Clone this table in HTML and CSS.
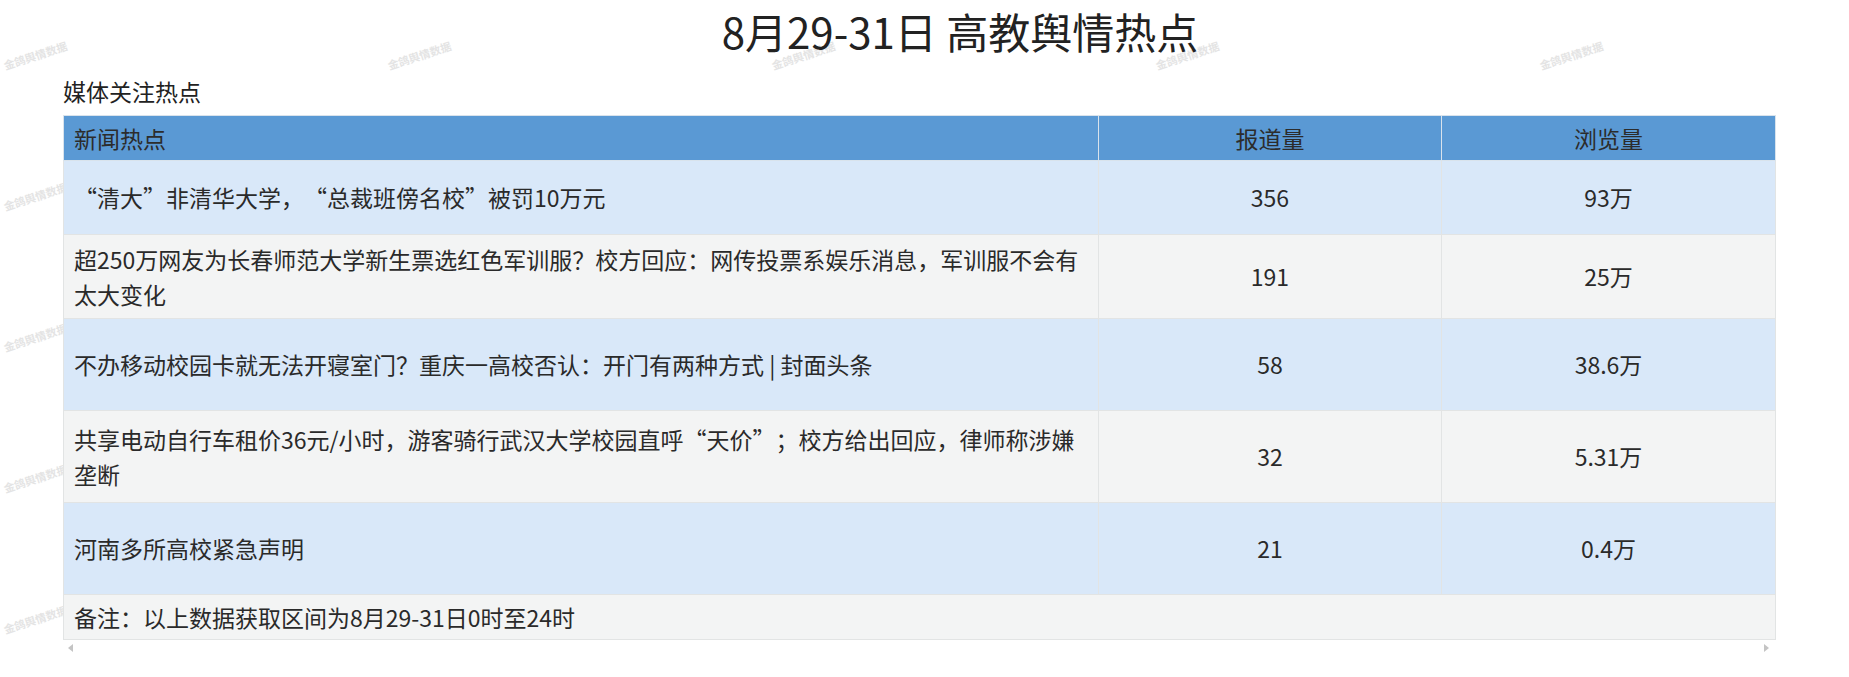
FILE: index.html
```html
<!DOCTYPE html>
<html lang="zh-CN">
<head>
<meta charset="utf-8">
<title>8月29-31日 高教舆情热点</title>
<link rel="stylesheet" href="styles.css">
</head>
<body>
<div class="watermarks" aria-hidden="true">
  <div class="wm-row"><span>金鸽舆情数据</span><span>金鸽舆情数据</span><span>金鸽舆情数据</span><span>金鸽舆情数据</span><span>金鸽舆情数据</span></div>
  <div class="wm-row"><span>金鸽舆情数据</span><span>金鸽舆情数据</span><span>金鸽舆情数据</span><span>金鸽舆情数据</span><span>金鸽舆情数据</span></div>
  <div class="wm-row"><span>金鸽舆情数据</span><span>金鸽舆情数据</span><span>金鸽舆情数据</span><span>金鸽舆情数据</span><span>金鸽舆情数据</span></div>
  <div class="wm-row"><span>金鸽舆情数据</span><span>金鸽舆情数据</span><span>金鸽舆情数据</span><span>金鸽舆情数据</span><span>金鸽舆情数据</span></div>
  <div class="wm-row"><span>金鸽舆情数据</span><span>金鸽舆情数据</span><span>金鸽舆情数据</span><span>金鸽舆情数据</span><span>金鸽舆情数据</span></div>
</div>
<div class="page">
  <h1 class="title">8月29-31日 高教舆情热点</h1>
  <div class="content">
    <div class="section-label">媒体关注热点</div>
    <table class="hot-table">
      <colgroup>
        <col class="col-news">
        <col class="col-num">
        <col class="col-view">
      </colgroup>
      <thead>
        <tr class="head-row">
          <th class="left">新闻热点</th>
          <th>报道量</th>
          <th>浏览量</th>
        </tr>
      </thead>
      <tbody>
        <tr class="odd h74">
          <td class="left">“清大”非清华大学，“总裁班傍名校”被罚10万元</td>
          <td>356</td>
          <td>93万</td>
        </tr>
        <tr class="even h84">
          <td class="left">超250万网友为长春师范大学新生票选红色军训服？校方回应：网传投票系娱乐消息，军训服不会有太大变化</td>
          <td>191</td>
          <td>25万</td>
        </tr>
        <tr class="odd h92">
          <td class="left">不办移动校园卡就无法开寝室门？重庆一高校否认：开门有两种方式 | 封面头条</td>
          <td>58</td>
          <td>38.6万</td>
        </tr>
        <tr class="even h92">
          <td class="left">共享电动自行车租价36元/小时，游客骑行武汉大学校园直呼“天价”；校方给出回应，律师称涉嫌垄断</td>
          <td>32</td>
          <td>5.31万</td>
        </tr>
        <tr class="odd h92">
          <td class="left">河南多所高校紧急声明</td>
          <td>21</td>
          <td>0.4万</td>
        </tr>
        <tr class="even foot-row">
          <td class="left" colspan="3">备注：以上数据获取区间为8月29-31日0时至24时</td>
        </tr>
      </tbody>
    </table>
    <div class="hscroll">
      <span class="arrow arrow-left"></span>
      <span class="arrow arrow-right"></span>
    </div>
  </div>
</div>
</body>
</html>
```

FILE: styles.css
```css
html, body {
  margin: 0;
  padding: 0;
  background: #ffffff;
}

body {
  font-family: "Noto Sans CJK SC", "Noto Sans", sans-serif;
  color: #2a2a2a;
  overflow: hidden;
  position: relative;
  min-height: 677px;
  text-spacing-trim: space-all;
}

/* watermark layer */
.watermarks {
  position: absolute;
  left: 0;
  top: 0;
  right: 0;
  bottom: 0;
  z-index: 0;
  display: flex;
  flex-direction: column;
  padding-top: 58px;
  gap: 127px;
  pointer-events: none;
}

.wm-row {
  display: flex;
  gap: 318px;
  padding-left: 6px;
}

.wm-row span {
  display: block;
  width: 66px;
  font-size: 11px;
  line-height: 14px;
  font-weight: 700;
  color: #e4e4e4;
  white-space: nowrap;
  transform: rotate(-18deg);
  transform-origin: left bottom;
}

.page {
  position: relative;
  z-index: 1;
}

.title {
  margin: 0;
  padding-left: 71px;
  text-align: center;
  font-size: 42px;
  font-weight: 400;
  line-height: 62px;
  color: #222222;
}

.content {
  margin: 0 74px 0 63px;
}

.section-label {
  font-size: 23px;
  line-height: 35px;
  padding-top: 12px;
  margin-bottom: 6px;
  color: #222222;
}

.hot-table {
  width: 100%;
  border-collapse: collapse;
  table-layout: fixed;
  font-size: 23px;
  line-height: 35px;
  border: 1px solid #e2e4e4;
  text-spacing-trim: space-all;
}

.col-news { width: 1035px; }
.col-num { width: 343px; }
.col-view { width: 334px; }

.hot-table th,
.hot-table td {
  padding: 0 10px;
  text-align: center;
  vertical-align: middle;
  font-weight: 400;
  border: 1px solid #e2e4e4;
}

.hot-table .left {
  text-align: left;
}

.head-row {
  height: 45px;
  background: #5a99d4;
}

.head-row th {
  color: #2c2c2c;
  border-color: #d9e3ec;
}

.odd { background: #d9e8f9; }
.even { background: #f3f4f4; }

.h74 { height: 74px; }
.h84 { height: 84px; }
.h92 { height: 92px; }

.foot-row { height: 45px; }

.hscroll {
  display: flex;
  justify-content: space-between;
  align-items: center;
  height: 16px;
  padding: 0 6px 0 5px;
}

.arrow {
  display: block;
  width: 0;
  height: 0;
  border-top: 4px solid transparent;
  border-bottom: 4px solid transparent;
}

.arrow-left {
  border-right: 5px solid #c4c4c4;
}

.arrow-right {
  border-left: 5px solid #c4c4c4;
}
```
